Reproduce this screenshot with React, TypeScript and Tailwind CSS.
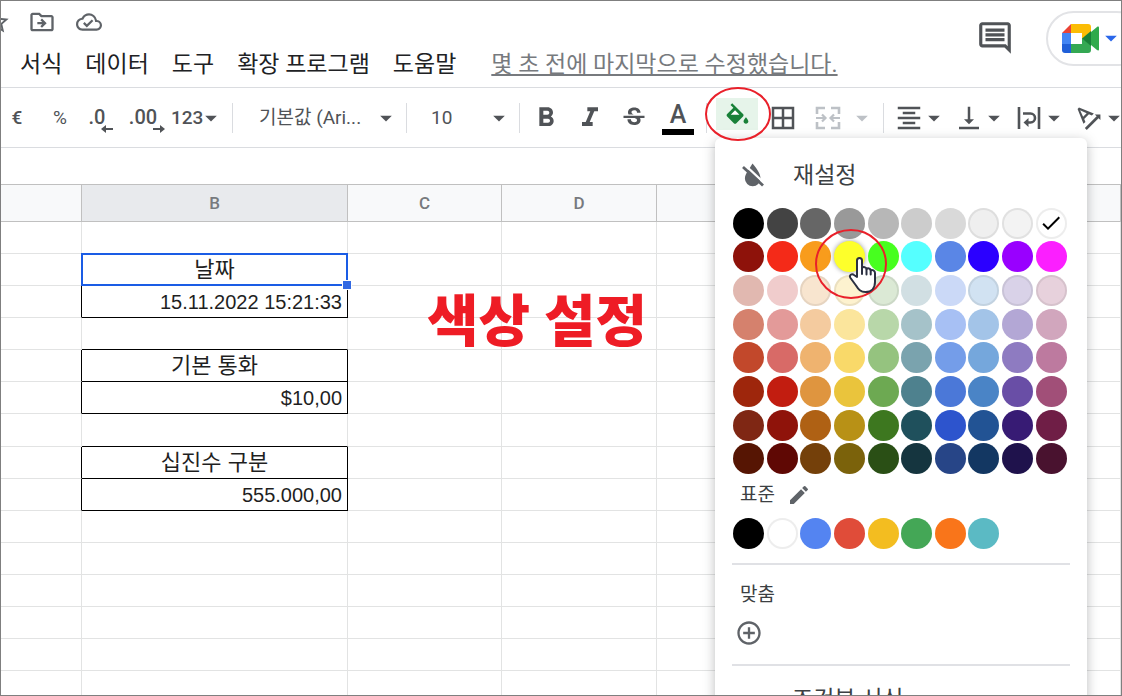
import React, { useState } from "react";
import {
  MdAddCircleOutline,
  MdArrowDropDown,
  MdBorderAll,
  MdCheck,
  MdEdit,
  MdFormatAlignCenter,
  MdFormatBold,
  MdFormatItalic,
  MdOutlineCloudDone,
  MdOutlineComment,
  MdOutlineDriveFileMove,
  MdStarBorder,
  MdStrikethroughS,
  MdTextRotationAngleup,
  MdVerticalAlignBottom,
} from "react-icons/md";

interface SheetRow {
  label?: string;
  value?: string;
  tall?: boolean;
}

const MENUS = ["서식", "데이터", "도구", "확장 프로그램", "도움말"];

const COLUMNS = ["", "B", "C", "D", "", "", ""];

const ROWS: SheetRow[] = [
  {},
  { label: "날짜" },
  { value: "15.11.2022 15:21:33" },
  {},
  { label: "기본 통화" },
  { value: "$10,00" },
  { tall: true },
  { label: "십진수 구분" },
  { value: "555.000,00" },
  {},
  {},
  {},
  {},
  {},
  {},
];

const PALETTE = [
  ["#000000", "#434343", "#666666", "#999999", "#b7b7b7", "#cccccc", "#d9d9d9", "#efefef", "#f3f3f3", "#ffffff"],
  ["#8e120a", "#f42a18", "#f89c1c", "#fdff2b", "#47ff1f", "#55ffff", "#5a86e6", "#2b00ff", "#9900ff", "#fb1fff"],
  ["#e1b8b0", "#f0cccc", "#f8e5cf", "#fdf2cf", "#dbe9d5", "#d1dfe3", "#cbd9f7", "#d1e2f2", "#d9d2e8", "#e7d1dc"],
  ["#d5816d", "#e39a99", "#f4cb9f", "#fbe59c", "#b8d7a9", "#a5c2c9", "#a7c0f4", "#a3c4e8", "#b3a7d5", "#d1a6bd"],
  ["#c2482b", "#d86a67", "#efb36f", "#f9d969", "#95c37f", "#7aa3ae", "#749de9", "#75a7dc", "#8e7bc1", "#bd7a9f"],
  ["#9e260c", "#c21d10", "#df953f", "#eac43c", "#6da952", "#4e818e", "#4b78d8", "#4a84c6", "#694ea6", "#a14f78"],
  ["#7f2714", "#8f130a", "#af6114", "#b89116", "#3d771f", "#1f505c", "#2d54cd", "#225394", "#371b74", "#6f1e46"],
  ["#561503", "#5f0804", "#74400a", "#7b620b", "#2a4f15", "#15353f", "#274587", "#133762", "#1f124c", "#49122f"],
];

const OUTLINED = ["#efefef", "#f3f3f3", "#ffffff", "#f8e5cf", "#fdf2cf", "#dbe9d5", "#d1e2f2", "#d9d2e8", "#e7d1dc"];

const STANDARD = ["#000000", "#ffffff", "#5484f1", "#e04c39", "#f3bd20", "#44a756", "#f9751a", "#5bbac4"];

const Separator = ({ className = "" }: { className?: string }) => (
  <div className={`h-[30px] w-px shrink-0 bg-[#dadce0] ${className}`} />
);

const BucketIcon = () => (
  <svg className="size-[29px]" viewBox="0 -3.5 24 24" fill="currentColor">
    <path d="M5.210 10L10 5.210 14.790 10z" fill="#fff" />
    <path d="M16.560 8.940L7.620 0 6.210 1.410l2.380 2.380-5.150 5.150c-.59.59-.59 1.540 0 2.120l5.500 5.500c.29.29.68.44 1.060.44s.77-.15 1.060-.44l5.500-5.500c.59-.58.59-1.530 0-2.120zM6.400 9.500L10 5.800 13.600 9.500zM19 11.500s-2 2.170-2 3.500c0 1.100.9 2 2 2s2-.9 2-2c0-1.330-2-3.500-2-3.500z" />
  </svg>
);

const NoColorIcon = () => (
  <svg className="h-[25px] w-[23px]" viewBox="0 0 23 25">
    <path d="M10.500 0.500C13 3.500 18.500 9.500 18.500 15.500a7.800 7.800 0 0 1-15.600 0c0-3 1.600-5.800 3.600-8.500z" fill="#5f6368" />
    <path d="M3 2l19 18" stroke="#fff" strokeWidth="2.400" />
    <path d="M1 4l20 18.500" stroke="#5f6368" strokeWidth="2.800" />
  </svg>
);

const MergeIcon = () => (
  <svg className="size-7" viewBox="0 0 28 28" fill="none" stroke="currentColor" strokeWidth="2.6">
    <path d="M11 4H3v6M17 4h8v6M11 24H3v-6M17 24h8v-6" />
    <path d="M2 14h9M8 10.500l3.500 3.500-3.500 3.500M26 14h-9M20 10.500l-3.500 3.500 3.500 3.500" strokeWidth="2.200" />
  </svg>
);

const WrapIcon = () => (
  <svg className="size-7" viewBox="0 0 28 28" fill="none" stroke="currentColor" strokeWidth="2.6">
    <path d="M4 3v22M24 3v22" />
    <path d="M8 9.500h7.500a4.500 4.500 0 0 1 0 9H11" />
    <path d="M13.500 14v9L8.500 18.500z" fill="currentColor" stroke="none" />
  </svg>
);

const MeetLogo = () => (
  <svg className="h-[29px] w-[37px]" viewBox="0 0 37 29">
    <path d="M0 9l9-9v9z" fill="#ea4335" />
    <path d="M9 0h17a3 3 0 0 1 3 3v5l-9 7V9H9z" fill="#fbbc04" />
    <path d="M0 9h9v11H0z" fill="#4285f4" />
    <path d="M0 20h9v9H3a3 3 0 0 1-3-3z" fill="#1f5fd8" />
    <path d="M9 20h11v-6l9 7v5a3 3 0 0 1-3 3H9z" fill="#34a853" />
    <path d="M29 8l6-5c1-.8 2-.5 2 .8v21.400c0 1.300-1 1.600-2 .8l-6-5z" fill="#2faa4b" />
    <path d="M20 14.500l9-7.500v15z" fill="#188038" />
  </svg>
);

const HandCursor = () => (
  <svg className="h-[38px] w-[29px]" viewBox="0 0 29 38" fill="#fff" stroke="#2c3142" strokeWidth="2" strokeLinejoin="round" strokeLinecap="round">
    <path d="M9 21V4.500c0-3.500 5-3.500 5 0V12c1-1.500 4.500-1 4.500 1 1-1.200 4.200-.8 4.200 1.500 1.500-1 4.300 0 4.300 2.500v9c0 6-3.500 10-9.500 10-5 0-7-2.500-9.500-6.500L2.500 22c-1.800-3 1.500-4.800 3.500-3z" />
    <path d="M14 12v6M18.500 13v5.500M22.700 14.500v4" fill="none" />
  </svg>
);

const DecimalLabel = ({ text, increase }: { text: string; increase?: boolean }) => (
  <span className="relative font-medium text-[20px] leading-6">
    {text}
    <svg className="absolute -right-2 top-5 h-2 w-3" viewBox="0 0 12 8" fill="currentColor">
      <path d={increase ? "M0 3h7V0l5 4-5 4V5H0z" : "M12 3H5V0L0 4l5 4V5h7z"} />
    </svg>
  </span>
);

interface SwatchProps {
  color: string;
  selected?: boolean;
  hovered?: boolean;
  onSelect: (color: string) => void;
}

const Swatch: React.FC<SwatchProps> = ({ color, selected, hovered, onSelect }) => (
  <div className="relative flex items-center justify-center">
    <button
      type="button"
      aria-label={color}
      onClick={() => onSelect(color)}
      style={{ backgroundColor: color }}
      className={`flex size-[31px] items-center justify-center rounded-full ${
        OUTLINED.includes(color) ? "border-2 border-black/7" : ""
      } ${hovered ? "shadow-[0_0_5px_rgba(0,0,0,0.4)]" : ""}`}
    >
      {selected && <MdCheck className="size-6 shrink-0 text-black" />}
    </button>
    {hovered && (
      <>
        <svg className="pointer-events-none absolute -left-[18px] -top-[11px] z-20 h-[70px] w-[72px]" viewBox="0 0 72 70">
          <ellipse cx="36" cy="35" rx="35" ry="34" fill="none" stroke="#e9202a" strokeWidth="2" />
        </svg>
        <div className="pointer-events-none absolute left-[15px] top-4 z-20">
          <HandCursor />
        </div>
      </>
    )}
  </div>
);

const FillColorMenu = () => {
  const [color, setColor] = useState("#ffffff");

  return (
    <div className="absolute -left-px top-10 z-10 h-[620px] w-[372px] rounded-md bg-white px-[17px] pt-[14px] text-[#3c4043] shadow-[0_3px_12px_rgba(60,64,67,0.35)]">
      <button type="button" className="flex h-12 w-full items-center gap-7 pl-[10px] text-[23px] leading-8" onClick={() => setColor("#ffffff")}>
        <NoColorIcon />
        재설정
      </button>
      <div className="mt-[7px] grid h-[269px] w-[336px] grid-cols-10 grid-rows-8">
        {PALETTE.map((row, r) =>
          row.map((c, i) => (
            <Swatch key={c} color={c} selected={c === color} hovered={r === 1 && i === 3} onSelect={setColor} />
          ))
        )}
      </div>
      <div className="flex h-[38px] items-center gap-3 pl-2 text-[19px] leading-6">
        표준
        <button type="button" aria-label="수정" className="text-[#5f6368]">
          <MdEdit className="size-6" />
        </button>
      </div>
      <div className="mt-[3px] grid h-[34px] w-[336px] grid-cols-10">
        {STANDARD.map((c) => (
          <Swatch key={c} color={c} onSelect={setColor} />
        ))}
      </div>
      <div className="mt-3 h-[2px] bg-[#e0e1e5]" />
      <p className="mt-[18px] pl-2 text-[19px] leading-6">맞춤</p>
      <button type="button" aria-label="맞춤 색상 추가" className="ml-[3px] mt-3 block text-[#5f6368]">
        <MdAddCircleOutline className="size-7" />
      </button>
      <div className="mt-[17px] h-[2px] bg-[#e0e1e5]" />
      <button type="button" className="mt-[18px] block pl-[60px] text-[23px] leading-8">
        조건부 서식
      </button>
    </div>
  );
};

const Toolbar = () => (
  <div className="flex h-[60px] items-center border-b border-[#dadce0] text-[19px] leading-7 text-[#505357]">
    <button type="button" className="w-8 shrink-0 font-medium">€</button>
    <button type="button" className="w-[54px] shrink-0">%</button>
    <button type="button" aria-label="소수점 이하 자릿수 감소" className="w-8 shrink-0 pr-3">
      <DecimalLabel text=".0" />
    </button>
    <button type="button" aria-label="소수점 이하 자릿수 증가" className="w-[52px] shrink-0 pr-1">
      <DecimalLabel text=".00" increase />
    </button>
    <button type="button" className="flex w-[46px] shrink-0 items-center font-medium">
      123
      <MdArrowDropDown className="-ml-1.5 size-7 shrink-0" />
    </button>
    <Separator className="ml-[15px]" />
    <label className="flex w-[173px] shrink-0 items-center pl-[26px] pr-1.5">
      <select aria-label="글꼴" className="min-w-0 flex-1 appearance-none bg-transparent outline-none">
        <option>기본값 (Ari...</option>
      </select>
      <MdArrowDropDown className="size-7 shrink-0" />
    </label>
    <Separator />
    <label className="flex w-[112px] shrink-0 items-center pl-6 pr-1.5">
      <select aria-label="글꼴 크기" className="min-w-0 flex-1 appearance-none bg-transparent outline-none">
        <option>10</option>
      </select>
      <MdArrowDropDown className="size-7 shrink-0" />
    </label>
    <Separator className="mr-1" />
    <button type="button" aria-label="굵게" className="flex w-11 shrink-0 justify-center">
      <MdFormatBold className="size-8" />
    </button>
    <button type="button" aria-label="기울임꼴" className="flex w-11 shrink-0 justify-center">
      <MdFormatItalic className="size-8" />
    </button>
    <button type="button" aria-label="취소선" className="flex w-11 shrink-0 justify-center">
      <MdStrikethroughS className="size-7" />
    </button>
    <button type="button" aria-label="텍스트 색상" className="flex w-11 shrink-0 flex-col items-center">
      <span className="font-medium text-[25px] leading-7">A</span>
      <span className="h-[6px] w-8 bg-black" />
    </button>
    <Separator className="ml-[6px] mr-[9px]" />
    <div className="relative shrink-0 pb-2">
      <button type="button" aria-label="채우기 색상" className="flex h-8 w-[42px] items-center justify-center bg-[#e6f4ea] text-[#188038]">
        <BucketIcon />
      </button>
      <FillColorMenu />
      <svg className="pointer-events-none absolute -left-[11px] -top-[11px] z-20 h-[54px] w-[66px]" viewBox="0 0 66 54">
        <ellipse cx="33" cy="27" rx="32" ry="26" fill="none" stroke="#e9202a" strokeWidth="2" />
      </svg>
    </div>
    <button type="button" aria-label="테두리" className="flex w-[50px] shrink-0 justify-center">
      <MdBorderAll className="size-[30px]" />
    </button>
    <button type="button" aria-label="셀 병합" disabled className="flex w-[68px] shrink-0 items-center pl-[6px] text-[#bdc1c6]">
      <MergeIcon />
      <MdArrowDropDown className="ml-[6px] size-7 shrink-0" />
    </button>
    <Separator className="ml-[7px] mr-[10px]" />
    {[
      { label: "가로 맞춤", icon: <MdFormatAlignCenter className="size-[30px] shrink-0" /> },
      { label: "세로 맞춤", icon: <MdVerticalAlignBottom className="size-[30px] shrink-0" /> },
      { label: "텍스트 줄바꿈", icon: <WrapIcon /> },
      { label: "텍스트 회전", icon: <MdTextRotationAngleup className="size-8 shrink-0" /> },
    ].map((item) => (
      <button key={item.label} type="button" aria-label={item.label} className="flex w-[60px] shrink-0 items-center">
        <span className="flex w-[30px] shrink-0 justify-center">{item.icon}</span>
        <MdArrowDropDown className="-ml-1 size-7 shrink-0" />
      </button>
    ))}
  </div>
);

const Sheet = () => {
  const isBoxed = (row?: SheetRow) => Boolean(row && (row.label || row.value));

  return (
    <div className="relative">
      <table className="w-full table-fixed border-separate border-spacing-0 border-t border-[#c0c0c0]">
        <colgroup>
          <col className="w-[81px]" />
          <col className="w-[266px]" />
          <col className="w-[154px]" />
          <col className="w-[155px]" />
          <col className="w-[154px]" />
          <col className="w-[154px]" />
          <col />
        </colgroup>
        <thead>
          <tr className="h-[37px]">
            {COLUMNS.map((name, i) => (
              <th
                key={i}
                className={`border-b border-r border-[#c0c0c0] p-0 font-medium text-[17px] leading-6 text-[#777a7e] ${
                  name === "B" ? "bg-[#e8eaed]" : "bg-[#f8f9fa]"
                }`}
              >
                {name}
              </th>
            ))}
          </tr>
        </thead>
        <tbody className="font-['Liberation_Sans','Noto_Sans_CJK_KR',sans-serif] text-[#1f1f1f]">
          {ROWS.map((row, r) => {
            const boxed = isBoxed(row);
            const closed = boxed || isBoxed(ROWS[r + 1]);
            return (
              <tr key={r} className={row.tall ? "h-[33px]" : "h-8"}>
                <td className={`border-b border-r border-b-[#e2e3e3] p-0 ${boxed ? "border-r-black" : "border-r-[#e2e3e3]"}`} />
                <td
                  className={`relative border-b border-r px-[5px] py-0 leading-7 ${closed ? "border-b-black" : "border-b-[#e2e3e3]"} ${
                    boxed ? "border-r-black" : "border-r-[#e2e3e3]"
                  } ${row.label ? "text-center text-[22px]" : "text-right text-[20px]"}`}
                >
                  {row.label || row.value}
                  {r === 1 && (
                    <>
                      <div className="absolute -inset-x-px -bottom-px -top-px border-2 border-[#1a5ce5]" />
                      <div className="absolute -bottom-[5px] -right-[5px] z-10 size-[10px] border border-white bg-[#3269e3]" />
                    </>
                  )}
                </td>
                {COLUMNS.slice(2).map((_, i) => (
                  <td key={i} className="border-b border-r border-[#e2e3e3] p-0" />
                ))}
              </tr>
            );
          })}
        </tbody>
      </table>
      <p className="absolute left-[426px] top-[106px] whitespace-nowrap font-black text-[56px] leading-[64px] text-[#ee1c25]">
        색상 설정
      </p>
    </div>
  );
};

export default function App() {
  return (
    <div className="h-screen overflow-hidden border border-[#7f7f7f] bg-white font-[Roboto,'Noto_Sans_CJK_KR',sans-serif]">
      <header className="flex h-[87px] justify-between border-b border-[#dadce0]">
        <div>
          <div className="flex h-[42px] items-center text-[#5f6368]">
            <button type="button" aria-label="별표" className="-ml-[18px]">
              <MdStarBorder className="size-7" />
            </button>
            <button type="button" aria-label="이동" className="ml-[17px]">
              <MdOutlineDriveFileMove className="size-7" />
            </button>
            <button type="button" aria-label="문서 상태" className="ml-5">
              <MdOutlineCloudDone className="size-[26px]" />
            </button>
          </div>
          <nav className="flex h-11 items-center gap-[23px] whitespace-nowrap pl-[19px] text-[23px] leading-8 text-[#202124]">
            {MENUS.map((menu) => (
              <button key={menu} type="button">
                {menu}
              </button>
            ))}
            <a href="#history" className="ml-3 text-[#777a7e] underline underline-offset-2">
              몇 초 전에 마지막으로 수정했습니다.
            </a>
          </nav>
        </div>
        <div className="-mr-[23px] flex h-[74px] shrink-0 items-center gap-8">
          <button type="button" aria-label="댓글 기록 열기" className="text-[#505357]">
            <MdOutlineComment className="size-[38px]" />
          </button>
          <button type="button" aria-label="회의 참여" className="flex h-[55px] w-[98px] items-center rounded-full border-2 border-[#e2e3e6] pl-[14px]">
            <MeetLogo />
            <MdArrowDropDown className="-ml-0.5 size-7 shrink-0 text-[#2a67ea]" />
          </button>
        </div>
      </header>
      <Toolbar />
      <div className="h-9">
        <input aria-label="수식 입력줄" className="h-full w-full px-3 text-[20px] outline-none" />
      </div>
      <Sheet />
    </div>
  );
}
